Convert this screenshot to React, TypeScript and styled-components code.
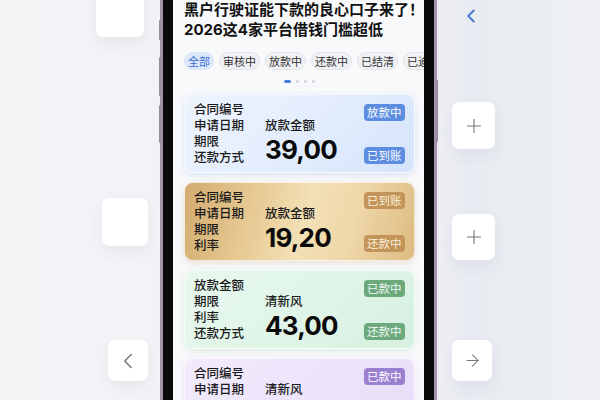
import React from "react"
import styled, { createGlobalStyle } from "styled-components"
import { ChevronLeft, Plus, ArrowRight } from "lucide-react"

const GlobalStyle = createGlobalStyle`
  html, body {
    margin: 0;
    padding: 0;
    width: 600px;
    height: 400px;
    overflow: hidden;
  }
  body {
    font-family: Inter, "Noto Sans CJK SC", sans-serif;
  }
`

type Tone = "blue" | "gold" | "green" | "purple"

const tones: Record<Tone, { bg: string; badge: string; badgeText: string; shadow: string }> = {
  blue: {
    bg: "linear-gradient(135deg, #eef4fe 0%, #e3edfc 50%, #d5e4fb 100%)",
    badge: "#5c8de0",
    badgeText: "#ffffff",
    shadow: "rgba(90, 130, 200, 0.18)",
  },
  gold: {
    bg: "linear-gradient(105deg, #d2ab6f 0%, #e6c891 28%, #f3e0b6 52%, #efd7a8 72%, #dcbb82 100%)",
    badge: "#c2945a",
    badgeText: "#fcefd8",
    shadow: "rgba(180, 140, 80, 0.22)",
  },
  green: {
    bg: "linear-gradient(135deg, #e8f8ee 0%, #def4e7 60%, #d6f0e0 100%)",
    badge: "#6caa7e",
    badgeText: "#eef9f1",
    shadow: "rgba(90, 160, 110, 0.15)",
  },
  purple: {
    bg: "linear-gradient(135deg, #f1ebfc 0%, #e7def8 100%)",
    badge: "#9a80d1",
    badgeText: "#ffffff",
    shadow: "rgba(130, 100, 190, 0.15)",
  },
}

const Page = styled.div`
  display: flex;
  width: 600px;
  height: 400px;
  overflow: hidden;
  background: linear-gradient(90deg, #f5f5f8 0%, #f2f3f6 25%, #eceef3 75%, #e8ebf1 78%, #eef0f4 100%);
`

const SideColumn = styled.div<{ $w: number }>`
  width: ${(p) => p.$w}px;
  flex-shrink: 0;
  display: flex;
  flex-direction: column;
`

const RightColumn = styled.div`
  flex: 1;
  display: flex;
  flex-direction: column;
  padding-left: 15px;
`

const Tile = styled.div<{ $w: number; $h: number; $ml: number; $mt: number }>`
  width: ${(p) => p.$w}px;
  height: ${(p) => p.$h}px;
  margin-left: ${(p) => p.$ml}px;
  margin-top: ${(p) => p.$mt}px;
  flex-shrink: 0;
  background: #ffffff;
  border-radius: 7px;
  box-shadow: 0 6px 16px rgba(60, 70, 100, 0.07);
  display: flex;
  align-items: center;
  justify-content: center;
  color: #757575;
`

const TopChevron = styled.div`
  margin-left: 8px;
  margin-top: 5px;
  height: 22px;
  color: #4a78d0;
`

const Phone = styled.div`
  position: relative;
  width: 277px;
  height: 400px;
  flex-shrink: 0;
  box-sizing: border-box;
  padding: 0 3px;
  background: linear-gradient(90deg, #a193a8, #cfc4d4 50%, #a193a8);
`

const SideButton = styled.div<{ $side: "left" | "right"; $top: number; $h: number }>`
  position: absolute;
  top: ${(p) => p.$top}px;
  height: ${(p) => p.$h}px;
  ${(p) => p.$side}: -1px;
  width: 2px;
  border-radius: 1px;
  background: #9a8c9f;
`

const Bezel = styled.div`
  height: 100%;
  background: #0a0a0a;
  padding: 0 10px;
`

const Screen = styled.div`
  height: 100%;
  box-sizing: border-box;
  overflow: hidden;
  background: #f8f9fb;
  padding: 0 9px 0 11px;
`

const Title = styled.h1`
  margin: 0;
  font-size: 15px;
  line-height: 19.5px;
  font-weight: 700;
  color: #111111;
  white-space: nowrap;
`

const Tabs = styled.div`
  display: flex;
  gap: 5px;
  margin-top: 13px;
  white-space: nowrap;
`

const Chip = styled.span<{ $active?: boolean }>`
  flex-shrink: 0;
  height: 18px;
  box-sizing: border-box;
  padding: 0 3px;
  display: inline-flex;
  align-items: center;
  font-size: 11px;
  border-radius: 9px;
  background: ${(p) => (p.$active ? "#dce7fa" : "#f0f1f4")};
  border: 1px solid ${(p) => (p.$active ? "#dce7fa" : "#e3e4e8")};
  color: ${(p) => (p.$active ? "#3a6fd6" : "#333333")};
`

const Dots = styled.div`
  display: flex;
  justify-content: center;
  gap: 5px;
  margin-top: 10px;
  height: 3px;
`

const Dot = styled.span<{ $active?: boolean }>`
  width: ${(p) => (p.$active ? 7 : 3)}px;
  height: 3px;
  border-radius: 2px;
  background: ${(p) => (p.$active ? "#4a7fe0" : "#d3d6dc")};
`

const CardList = styled.div`
  display: flex;
  flex-direction: column;
  gap: 9px;
  margin-top: 10.5px;
`

const Card = styled.div<{ $tone: Tone }>`
  height: 79px;
  flex-shrink: 0;
  box-sizing: border-box;
  border-radius: 9px;
  padding: 7px 9px 6px 9px;
  display: grid;
  grid-template-columns: 71px 1fr auto;
  background: ${(p) => tones[p.$tone].bg};
  border: 1px solid rgba(255, 255, 255, 0.7);
  box-shadow: 0 2px 6px ${(p) => tones[p.$tone].shadow};
`

const Labels = styled.div`
  display: flex;
  flex-direction: column;
  font-size: 12.5px;
  line-height: 16px;
  font-weight: 500;
  color: #1a1a1a;
`

const Middle = styled.div`
  display: flex;
  flex-direction: column;
  padding-top: 16px;
  font-size: 12.5px;
  line-height: 16px;
  font-weight: 500;
  color: #1a1a1a;
`

const Amount = styled.div`
  margin-top: 1px;
  font-size: 26px;
  line-height: 30px;
  font-weight: 700;
  letter-spacing: -0.8px;
  color: #0a0a0a;
`

const Badges = styled.div`
  display: flex;
  flex-direction: column;
  justify-content: space-between;
  align-items: flex-end;
  padding: 2px 0;
`

const Badge = styled.span<{ $tone: Tone }>`
  height: 17px;
  padding: 0 3.5px;
  display: inline-flex;
  align-items: center;
  border-radius: 4px;
  font-size: 11.5px;
  background: ${(p) => tones[p.$tone].badge};
  color: ${(p) => tones[p.$tone].badgeText};
`

const tabs = ["全部", "审核中", "放款中", "还款中", "已结清", "已逾期"]

const cards: {
  tone: Tone
  labels: string[]
  caption: string
  amount?: string
  top: string
  bottom?: string
}[] = [
  { tone: "blue", labels: ["合同编号", "申请日期", "期限", "还款方式"], caption: "放款金额", amount: "39,00", top: "放款中", bottom: "已到账" },
  { tone: "gold", labels: ["合同编号", "申请日期", "期限", "利率"], caption: "放款金额", amount: "19,20", top: "已到账", bottom: "还款中" },
  { tone: "green", labels: ["放款金额", "期限", "利率", "还款方式"], caption: "清新风", amount: "43,00", top: "已款中", bottom: "还款中" },
  { tone: "purple", labels: ["合同编号", "申请日期"], caption: "清新风", top: "已款中" },
]

const App = () => (
  <>
    <GlobalStyle />
    <Page>
      <SideColumn $w={160}>
        <Tile $w={48} $h={47} $ml={96} $mt={-10} />
        <Tile $w={46} $h={48} $ml={102} $mt={161} />
        <Tile $w={40} $h={41} $ml={108} $mt={94}>
          <ChevronLeft size={26} strokeWidth={1.3} />
        </Tile>
      </SideColumn>

      <Phone>
        <SideButton $side="left" $top={20} $h={20} />
        <SideButton $side="left" $top={57} $h={39} />
        <SideButton $side="left" $top={105} $h={38} />
        <SideButton $side="right" $top={80} $h={62} />
        <Bezel>
          <Screen>
            <Title>
              黑户行驶证能下款的良心口子来了！
              <br />
              2026这4家平台借钱门槛超低
            </Title>
            <Tabs>
              {tabs.map((t, i) => (
                <Chip key={t} $active={i === 0}>
                  {t}
                </Chip>
              ))}
            </Tabs>
            <Dots>
              <Dot $active />
              <Dot />
              <Dot />
              <Dot />
            </Dots>
            <CardList>
              {cards.map((c, i) => (
                <Card key={i} $tone={c.tone}>
                  <Labels>
                    {c.labels.map((l) => (
                      <span key={l}>{l}</span>
                    ))}
                  </Labels>
                  <Middle>
                    <span>{c.caption}</span>
                    {c.amount && <Amount>{c.amount}</Amount>}
                  </Middle>
                  <Badges>
                    <Badge $tone={c.tone}>{c.top}</Badge>
                    {c.bottom && <Badge $tone={c.tone}>{c.bottom}</Badge>}
                  </Badges>
                </Card>
              ))}
            </CardList>
          </Screen>
        </Bezel>
      </Phone>

      <RightColumn>
        <TopChevron>
          <ChevronLeft size={22} strokeWidth={2} />
        </TopChevron>
        <Tile $w={43} $h={47} $ml={0} $mt={75}>
          <Plus size={22} strokeWidth={1.2} />
        </Tile>
        <Tile $w={43} $h={46} $ml={0} $mt={65}>
          <Plus size={22} strokeWidth={1.2} />
        </Tile>
        <Tile $w={40} $h={41} $ml={0} $mt={80}>
          <ArrowRight size={19} strokeWidth={1.3} />
        </Tile>
      </RightColumn>
    </Page>
  </>
)

export default App
